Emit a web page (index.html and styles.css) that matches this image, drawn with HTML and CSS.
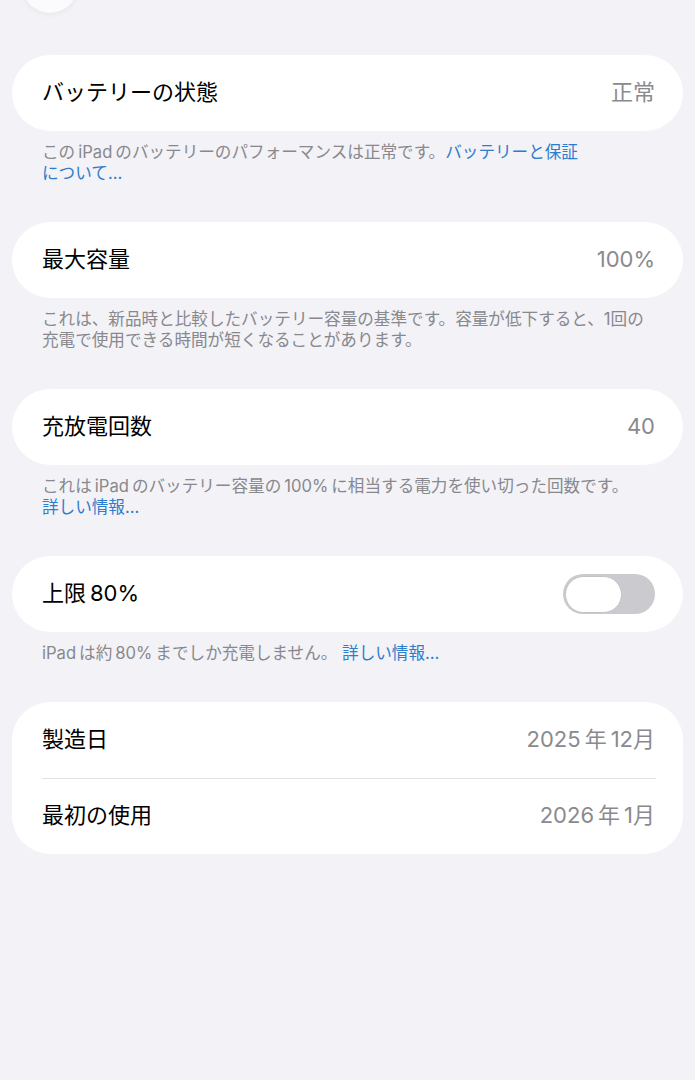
FILE: index.html
```html
<!DOCTYPE html>
<html lang="ja">
  <head>
    <meta charset="UTF-8" />
    <meta name="viewport" content="width=device-width, initial-scale=1.0" />
    <title>バッテリーの状態</title>
    <link rel="stylesheet" href="styles.css">
  </head>
  <body>
    <!-- 上端で切れている戻るボタン -->
    <div class="nav-bar">
      <span class="nav-circle"></span>
    </div>

    <div class="settings">
      <div class="group">
        <div class="row">
          <span class="row-title">バッテリーの状態</span>
          <span class="row-value">正常</span>
        </div>
      </div>
      <p class="group-footer">この&thinsp;iPad&thinsp;のバッテリーのパフォーマンスは正常です。<a class="link">バッテリーと保証<br>について…</a></p>

      <div class="group">
        <div class="row">
          <span class="row-title">最大容量</span>
          <span class="row-value">100%</span>
        </div>
      </div>
      <p class="group-footer">これは、新品時と比較したバッテリー容量の基準です。容量が低下すると、1回の<br>充電で使用できる時間が短くなることがあります。</p>

      <div class="group">
        <div class="row">
          <span class="row-title">充放電回数</span>
          <span class="row-value">40</span>
        </div>
      </div>
      <p class="group-footer">これは&thinsp;iPad&thinsp;のバッテリー容量の&thinsp;100%&thinsp;に相当する電力を使い切った回数です。<br><a class="link">詳しい情報…</a></p>

      <div class="group">
        <div class="row">
          <span class="row-title">上限&thinsp;80%</span>
          <input class="switch-input" id="limit" type="checkbox" />
          <label class="switch" for="limit"><span class="switch-knob"></span></label>
        </div>
      </div>
      <p class="group-footer">iPad&thinsp;は約&thinsp;80%&thinsp;までしか充電しません。 <a class="link">詳しい情報…</a></p>

      <div class="group">
        <div class="row">
          <span class="row-title">製造日</span>
          <span class="row-value">2025&thinsp;年&thinsp;12月</span>
        </div>
        <div class="row">
          <span class="row-title">最初の使用</span>
          <span class="row-value">2026&thinsp;年&thinsp;1月</span>
        </div>
      </div>
    </div>
  </body>
</html>
```

FILE: styles.css
```css
* {
  box-sizing: border-box;
}

body {
  margin: 0;
  min-height: 1080px;
  background: #f2f2f7;
  color: #000;
  font-family: Inter, "Noto Sans CJK JP", sans-serif;
}

/* 上のナビゲーション */
.nav-bar {
  height: 55px;
  padding-left: 22px;
  overflow: hidden;
}

.nav-circle {
  display: block;
  width: 56px;
  height: 56px;
  margin-top: -43px;
  border-radius: 50%;
  background: #fbfbfd;
  box-shadow: 0 1px 6px rgba(0, 0, 0, 0.06);
}

.settings {
  padding: 0 12px;
}

.group {
  background: #fff;
  border-radius: 38px;
  overflow: hidden;
}

.group + .group,
.group-footer + .group {
  margin-top: 38px;
}

.row {
  position: relative;
  height: 76px;
  padding: 0 28px 0 30px;
  display: flex;
  align-items: center;
  justify-content: space-between;
}

/* 2行目以降の区切り線 */
.row + .row::before {
  content: "";
  position: absolute;
  top: 0;
  left: 30px;
  right: 27px;
  height: 1px;
  background: #e3e3e6;
}

.row-title {
  font-size: 22px;
  line-height: 28px;
  margin-top: -2px;
}

.row-value {
  font-size: 22px;
  line-height: 28px;
  margin-top: -2px;
  color: #8a8a8e;
}

.group-footer {
  margin: 0;
  padding: 11px 30px 0;
  font-size: 16.6px;
  line-height: 21px;
  color: #88888d;
  white-space: nowrap;
}

.link {
  color: #2f7ccd;
  cursor: pointer;
}

/* トグル（オフ） */
.switch-input {
  position: absolute;
  visibility: hidden;
}

.switch {
  display: flex;
  align-items: center;
  width: 92px;
  height: 40px;
  padding: 0 2px;
  border-radius: 20px;
  background: #cbcbcf;
  cursor: pointer;
}

.switch-knob {
  width: 57px;
  height: 37px;
  border-radius: 19px;
  background: #fff;
  border: 1.5px solid #c3c3c6;
  transition: transform 0.2s ease;
}

.switch-input:checked + .switch {
  background: #34c759;
}

.switch-input:checked + .switch .switch-knob {
  transform: translateX(31px);
}
```
